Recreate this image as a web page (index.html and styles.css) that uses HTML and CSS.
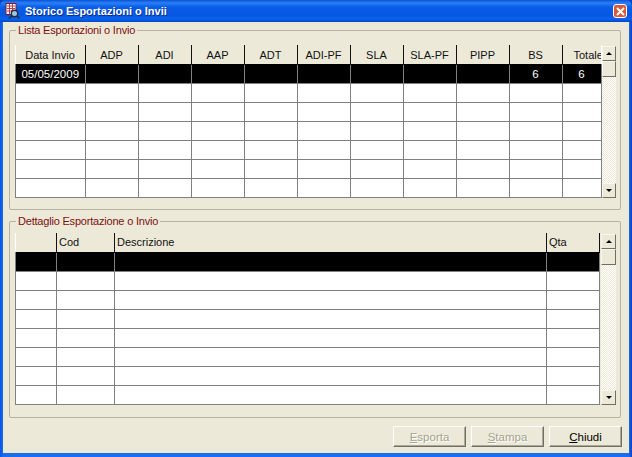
FILE: index.html
```html
<!DOCTYPE html>
<html lang="it">
<head>
  <meta charset="UTF-8">
  <title>Storico Esportazioni o Invii</title>
  <link rel="stylesheet" href="styles.css">
</head>
<body>
  <div class="finestra">
    <div class="titolo">
      <svg class="titolo-icona" width="16" height="16" viewBox="0 0 16 16">
        <rect x="1" y="0.5" width="10" height="11" fill="#fff" stroke="#7a1f2a"/>
        <path d="M2 3h8M2 5.5h8M2 8h8M4.5 1v10M7.5 1v10" stroke="#c23a44" stroke-width="1"/>
        <circle cx="9.5" cy="10.5" r="3.2" fill="#9fc4e8" stroke="#20303f" stroke-width="1.4"/>
        <path d="M7 13l-3 2.4M12 13l2.5 2.4" stroke="#20303f" stroke-width="1.5"/>
      </svg>
      <span class="titolo-testo">Storico Esportazioni o Invii</span>
      <div class="chiudi-x">
        <svg width="9" height="9" viewBox="0 0 9 9"><path d="M1 1l7 7M8 1l-7 7" stroke="#fff" stroke-width="2"/></svg>
      </div>
    </div>

    <div class="contenuto">
      <fieldset class="gruppo gruppo-lista">
        <legend>Lista Esportazioni o Invio</legend>
        <div class="griglia">
          <table class="tabella lista">
            <thead>
              <tr>
                <th>Data Invio</th><th>ADP</th><th>ADI</th><th>AAP</th><th>ADT</th><th>ADI-PF</th>
                <th>SLA</th><th>SLA-PF</th><th>PIPP</th><th>BS</th><th class="taglia">Totale</th>
              </tr>
            </thead>
            <tbody>
              <tr class="sel"><td>05/05/2009</td><td></td><td></td><td></td><td></td><td></td><td></td><td></td><td></td><td>6</td><td>6</td></tr>
              <tr><td></td><td></td><td></td><td></td><td></td><td></td><td></td><td></td><td></td><td></td><td></td></tr>
              <tr><td></td><td></td><td></td><td></td><td></td><td></td><td></td><td></td><td></td><td></td><td></td></tr>
              <tr><td></td><td></td><td></td><td></td><td></td><td></td><td></td><td></td><td></td><td></td><td></td></tr>
              <tr><td></td><td></td><td></td><td></td><td></td><td></td><td></td><td></td><td></td><td></td><td></td></tr>
              <tr><td></td><td></td><td></td><td></td><td></td><td></td><td></td><td></td><td></td><td></td><td></td></tr>
              <tr><td></td><td></td><td></td><td></td><td></td><td></td><td></td><td></td><td></td><td></td><td></td></tr>
            </tbody>
          </table>
          <div class="scroll">
            <div class="scroll-btn"><span class="su"></span></div>
            <div class="scroll-cursore"></div>
            <div class="scroll-pista"></div>
            <div class="scroll-btn"><span class="giu"></span></div>
          </div>
        </div>
      </fieldset>

      <fieldset class="gruppo gruppo-dettaglio">
        <legend>Dettaglio Esportazione o Invio</legend>
        <div class="griglia">
          <table class="tabella dettaglio">
            <thead>
              <tr><th></th><th>Cod</th><th>Descrizione</th><th>Qta</th></tr>
            </thead>
            <tbody>
              <tr class="sel"><td></td><td></td><td></td><td></td></tr>
              <tr><td></td><td></td><td></td><td></td></tr>
              <tr><td></td><td></td><td></td><td></td></tr>
              <tr><td></td><td></td><td></td><td></td></tr>
              <tr><td></td><td></td><td></td><td></td></tr>
              <tr><td></td><td></td><td></td><td></td></tr>
              <tr><td></td><td></td><td></td><td></td></tr>
              <tr><td></td><td></td><td></td><td></td></tr>
            </tbody>
          </table>
          <div class="scroll">
            <div class="scroll-btn"><span class="su"></span></div>
            <div class="scroll-cursore"></div>
            <div class="scroll-pista"></div>
            <div class="scroll-btn"><span class="giu"></span></div>
          </div>
        </div>
      </fieldset>

      <div class="bottoni">
        <button class="btn" disabled><u>E</u>sporta</button>
        <button class="btn" disabled><u>S</u>tampa</button>
        <button class="btn"><u>C</u>hiudi</button>
      </div>
    </div>
  </div>
</body>
</html>
```

FILE: styles.css
```css
body {
  margin: 0;
  padding: 0;
  font-family: "Liberation Sans", Arial, sans-serif;
  font-size: 11px;
  background-color: #0a3fc8;
}
.finestra {
  width: 632px;
  height: 457px;
  box-sizing: border-box;
  padding: 0 3px 4px 3px;
  display: flex;
  flex-direction: column;
  overflow: hidden;
  border-radius: 6px 6px 0 0;
  background-color: #0a4be0;
  background-image: linear-gradient(to right, #0a55e5 0, #1a6cf0 3px, #1a6cf0 629px, #0a3fc8 632px);
}
.titolo {
  height: 22px;
  flex: none;
  margin: 0 -3px;
  padding: 0 5px 0 6px;
  display: flex;
  align-items: center;
  color: white;
  border-radius: 6px 6px 0 0;
  background-image: linear-gradient(to bottom, #0a52d8 0, #2a80f5 3px, #0a5de8 7px, #0557e2 15px, #0a62ee 19px, #0347c8 22px);
}
.titolo-icona {
  flex: none;
  margin-left: -1px;
}
.titolo-testo {
  margin-left: 4px;
  font-weight: bold;
  font-size: 11px;
  text-shadow: 1px 1px 0 #0a2f8a;
}
.chiudi-x {
  margin-left: auto;
  width: 14px;
  height: 14px;
  box-sizing: border-box;
  display: flex;
  align-items: center;
  justify-content: center;
  border: 1px solid #fff;
  border-radius: 3px;
  background-color: #d9593a;
}
.contenuto {
  flex: 1;
  background-color: #ece9d8;
  padding: 1px 6px 0 6px;
  display: flex;
  flex-direction: column;
}
.gruppo {
  margin: 0;
  padding: 0 5px;
  border: 1px solid #b5b29f;
  border-radius: 2px;
  width: 612px;
  box-sizing: border-box;
  min-width: 0;
}
.gruppo legend {
  color: #7c1010;
  padding: 0 2px;
  margin-left: 1px;
  line-height: 14px;
  letter-spacing: -0.2px;
}
.gruppo-lista {
  height: 187px;
}
.gruppo-dettaglio {
  height: 204px;
  margin-top: 4px;
}
.griglia {
  display: flex;
  margin-top: 8px;
}
.gruppo-dettaglio .griglia {
  margin-top: 5px;
}
.tabella {
  border-collapse: collapse;
  table-layout: fixed;
  background-color: white;
}
.tabella th {
  height: 19px;
  padding: 0;
  background-color: #ece9d8;
  font-weight: normal;
  color: #111;
  border-right: 1px solid #111;
  overflow: hidden;
  white-space: nowrap;
}
.tabella td {
  height: 18px;
  padding: 0;
  border: 1px solid #808080;
  text-align: center;
  overflow: hidden;
  font-size: 11.5px;
}
.tabella tr.sel td {
  background-color: black;
  color: white;
  border-color: #808080;
  border-top-color: black;
}
.lista {
  width: 586px;
}
.lista th:first-child {
  width: 69px;
}
.lista th {
  width: 52px;
}
.lista th.taglia {
  width: 39px;
  border-right: none;
  text-align: left;
  padding-left: 11px;
  box-sizing: border-box;
}
.dettaglio {
  width: 584px;
}
.dettaglio th {
  text-align: left;
  padding-left: 2px;
  box-sizing: border-box;
}
.dettaglio th:nth-child(1) { width: 41px; }
.dettaglio th:nth-child(2) { width: 58px; }
.dettaglio th:nth-child(3) { width: 432px; }
.dettaglio th:nth-child(4) { width: 53px; }
.scroll {
  flex: none;
  width: 14px;
  padding-top: 1px;
  display: flex;
  flex-direction: column;
}
.gruppo-dettaglio .scroll {
  width: 15px;
  margin-left: 1px;
}
.scroll-btn {
  flex: none;
  height: 15px;
  display: flex;
  align-items: center;
  justify-content: center;
  box-sizing: border-box;
  background-color: #ece9d8;
  border: 1px solid;
  border-color: #f8f7f0 #716f64 #716f64 #f8f7f0;
}
.scroll-cursore {
  flex: none;
  height: 16px;
  box-sizing: border-box;
  background-color: #ece9d8;
  border: 1px solid;
  border-color: #f8f7f0 #716f64 #716f64 #f8f7f0;
}
.scroll-pista {
  flex: 1;
  background-color: #f4f3ec;
  background-image: conic-gradient(#ece9d8 25%, #fff 0 50%, #ece9d8 0 75%, #fff 0);
  background-size: 2px 2px;
}
.su, .giu {
  width: 0;
  height: 0;
  border-left: 3px solid transparent;
  border-right: 3px solid transparent;
}
.su {
  border-bottom: 3px solid black;
}
.giu {
  border-top: 3px solid black;
}
.bottoni {
  display: flex;
  justify-content: flex-end;
  gap: 5px;
  margin-top: 8px;
  width: 613px;
}
.btn {
  width: 73px;
  height: 21px;
  padding: 0;
  font-family: inherit;
  font-size: 11.5px;
  color: black;
  background-color: #ece9d8;
  border: 1px solid;
  border-color: #fff #716f64 #716f64 #fff;
  box-shadow: inset -1px -1px 0 #aca899;
}
.btn:disabled {
  color: #a5a28f;
  text-shadow: 1px 1px 0 #fff;
}
```
